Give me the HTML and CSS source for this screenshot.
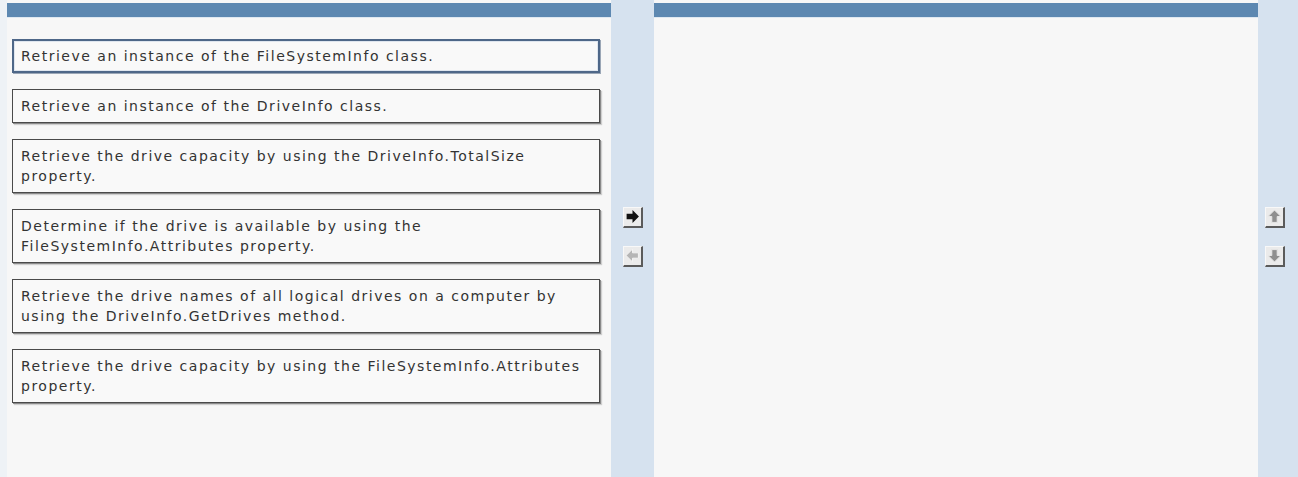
FILE: index.html
```html
<!DOCTYPE html>
<html lang="en">
<head>
<meta charset="utf-8">
<title>Build List</title>
<link rel="stylesheet" href="styles.css">
</head>
<body>
<div class="builder">
  <div class="gutter"></div>
  <section class="panel">
    <div class="panel-bar"></div>
    <ul class="choices">
      <li class="choice selected">Retrieve an instance of the FileSystemInfo class.</li>
      <li class="choice">Retrieve an instance of the DriveInfo class.</li>
      <li class="choice">Retrieve the drive capacity by using the DriveInfo.TotalSize property.</li>
      <li class="choice">Determine if the drive is available by using the FileSystemInfo.Attributes property.</li>
      <li class="choice">Retrieve the drive names of all logical drives on a computer by using the DriveInfo.GetDrives method.</li>
      <li class="choice">Retrieve the drive capacity by using the FileSystemInfo.Attributes property.</li>
    </ul>
  </section>
  <div class="controls">
    <button class="tool" title="Add">
      <svg viewBox="0 0 14 14" width="15" height="15"><path d="M1.5 4.5h5.5V1L13 7 7 13V9.5H1.5z" fill="#111"/></svg>
    </button>
    <button class="tool" title="Remove">
      <svg viewBox="0 0 14 14" width="15" height="15"><path d="M12.5 4.5H7V1L1 7l6 6V9.5h5.5z" fill="#b5b5b5" stroke="#f4f4f4" stroke-width="0.9"/></svg>
    </button>
  </div>
  <section class="panel">
    <div class="panel-bar"></div>
    <ul class="choices"></ul>
  </section>
  <div class="controls right">
    <button class="tool" title="Move up">
      <svg viewBox="0 0 14 14" width="15" height="15"><path d="M4.5 12.5V7H1L7 1l6 6H9.5v5.5z" fill="#8f8f8f" stroke="#e8e8e8" stroke-width="0.9"/></svg>
    </button>
    <button class="tool" title="Move down">
      <svg viewBox="0 0 14 14" width="15" height="15"><path d="M4.5 1.5V7H1l6 6 6-6H9.5V1.5z" fill="#8f8f8f" stroke="#e8e8e8" stroke-width="0.9"/></svg>
    </button>
  </div>
</div>
</body>
</html>
```
FILE: styles.css
```css
html, body {
  margin: 0;
  padding: 0;
}

body {
  background: #eef2f7;
  font-family: "DejaVu Sans", Verdana, sans-serif;
  font-size: 14px;
  color: #333;
}

.builder {
  display: flex;
  height: 477px;
}

.gutter {
  width: 7px;
  flex: none;
  background: #eef2f6;
}

.panel {
  width: 604px;
  flex: none;
  background: #f7f7f7;
  padding-top: 3px;
  box-sizing: border-box;
}

.panel-bar {
  height: 14px;
  background: #5d88b1;
  border-bottom: 1px solid #dfe8f1;
}

.choices {
  list-style: none;
  margin: 0;
  padding: 21px 11px 0 5px;
  display: flex;
  flex-direction: column;
  gap: 16px;
}

.choice {
  background: #f9f9f9;
  border: 1px solid #4a4a4a;
  box-shadow: 1px 1px 0 #8a8a8a, 2px 2px 1px #cfcfcf;
  padding: 6px 2px 6px 8px;
  line-height: 20px;
  letter-spacing: 1.5px;
}

.choice.selected {
  border: 2px solid #4e6788;
  padding: 5px 1px 5px 7px;
  box-shadow: inset 0 0 0 1px #dfe6ef, 1px 1px 0 #9aa6b6;
}

.controls {
  width: 43px;
  flex: none;
  background: #d6e2ef;
  display: flex;
  flex-direction: column;
  align-items: center;
  justify-content: center;
  gap: 18px;
  padding-bottom: 4px;
  box-sizing: border-box;
}

.controls.right {
  width: 40px;
  padding-right: 6px;
}

.tool {
  width: 20px;
  height: 21px;
  padding: 0;
  margin: 0;
  background: #ebebeb;
  border-style: solid;
  border-width: 1px 2px 2px 1px;
  border-color: #f8f8f8 #5b5b5b #5b5b5b #f8f8f8;
  display: flex;
  align-items: center;
  justify-content: center;
}
```
